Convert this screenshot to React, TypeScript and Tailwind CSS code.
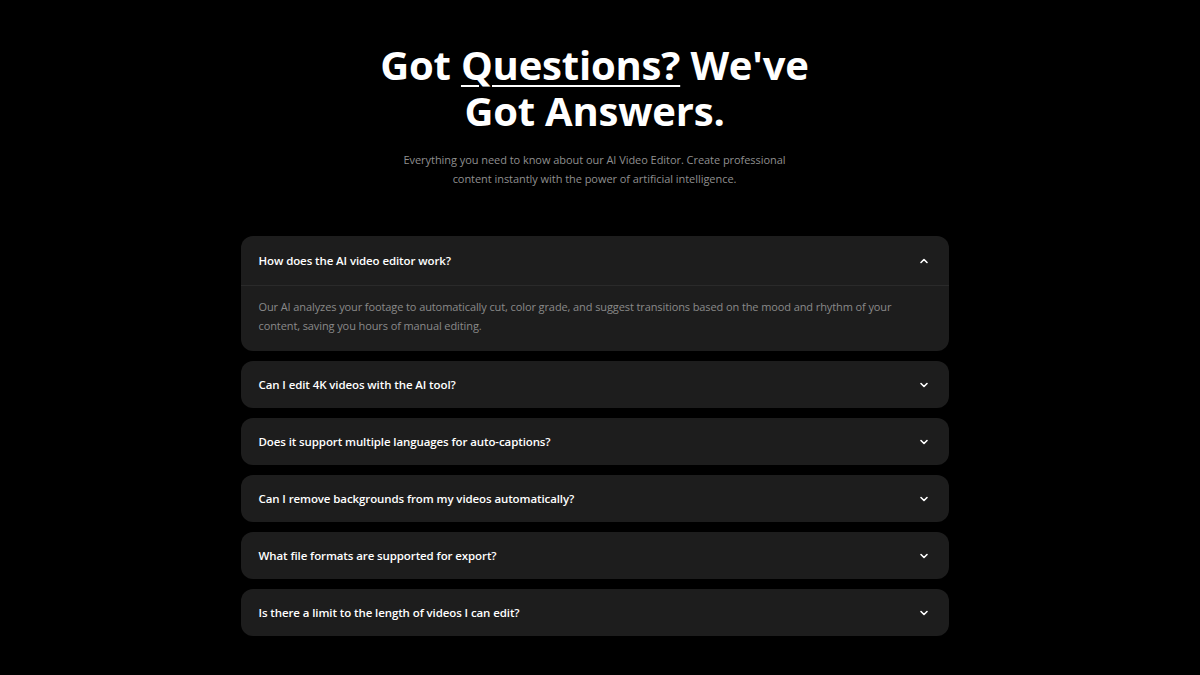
import { useState } from "react"
import { ChevronDown } from "lucide-react"

const faqs = [
  {
    q: "How does the AI video editor work?",
    a: "Our AI analyzes your footage to automatically cut, color grade, and suggest transitions based on the mood and rhythm of your content, saving you hours of manual editing.",
  },
  { q: "Can I edit 4K videos with the AI tool?", a: "Yes. 4K footage is fully supported on every plan." },
  { q: "Does it support multiple languages for auto-captions?", a: "Captions can be generated in more than 50 languages." },
  { q: "Can I remove backgrounds from my videos automatically?", a: "Yes, background removal runs in one click." },
  { q: "What file formats are supported for export?", a: "MP4, MOV, WebM and GIF are supported." },
  { q: "Is there a limit to the length of videos I can edit?", a: "Videos up to 2 hours can be edited." },
]

export default function App() {
  const [open, setOpen] = useState<number | null>(0)

  return (
    <div className="min-h-screen bg-black text-white font-['Open_Sans',sans-serif] flex flex-col items-center pt-[42px] pr-[11px]">
      <h1 className="text-[40px] leading-[46px] font-bold text-center tracking-[-0.2px] w-[480px]">
        Got <span className="underline decoration-[2px] underline-offset-[5px]">Questions?</span> We've Got Answers.
      </h1>
      <p className="mt-[16px] text-[11px] leading-[19px] tracking-[-0.05px] text-[#8f8f8f] text-center w-[400px]">
        Everything you need to know about our AI Video Editor. Create professional content instantly with the power of artificial intelligence.
      </p>

      <div className="mt-[48px] w-[708px] flex flex-col gap-[10px]">
        {faqs.map((f, i) => {
          const isOpen = open === i
          return (
            <div key={i} className="bg-[#1d1d1d] rounded-xl">
              <button
                onClick={() => setOpen(isOpen ? null : i)}
                className={`w-full px-[18px] flex items-center justify-between text-left ${isOpen ? "h-[49px]" : "h-[47px]"}`}
              >
                <span className="text-[11.5px] font-semibold tracking-[-0.1px] text-white">{f.q}</span>
                <ChevronDown
                  strokeWidth={3.2}
                  className={`w-[12px] h-[12px] mr-[1px] text-white ${isOpen ? "rotate-180" : ""}`}
                />
              </button>
              {isOpen && (
                <div className="border-t border-[#2a2a2a] px-[18px] pt-[11px] pb-[16px] text-[11px] leading-[19px] tracking-[-0.1px] text-[#8a8a8a]">
                  {f.a}
                </div>
              )}
            </div>
          )
        })}
      </div>
    </div>
  )
}
